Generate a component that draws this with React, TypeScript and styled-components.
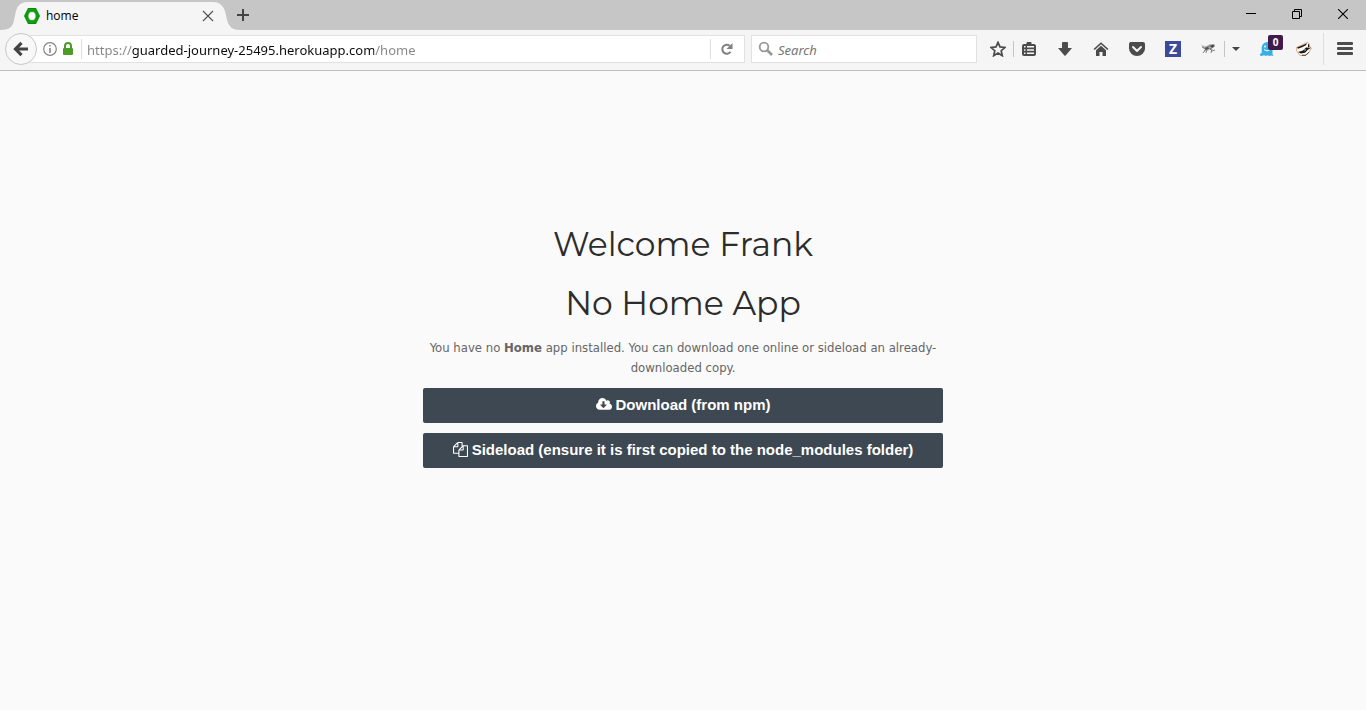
import React from "react";
import styled, { createGlobalStyle } from "styled-components";

const chromeFont = `"Noto Sans", "Open Sans", sans-serif`;

const GlobalStyle = createGlobalStyle`
  * { box-sizing: border-box; }
  body { margin: 0; background: #fafafa; font-family: "Open Sans", "Noto Sans", sans-serif; }
  button, input { font: inherit; }
  svg { display: block; }
`;

const Page = styled.div`
  display: flex;
  flex-direction: column;
  min-height: 100vh;
`;

const TabStrip = styled.header`
  display: flex;
  height: 30px;
  background: #c6c6c6;
`;

const Tab = styled.div`
  display: flex;
  align-items: center;
  width: 228px;
  height: 30px;
  padding: 2px 20px 0 24px;
  position: relative;
  font: 12px/16px "Open Sans", sans-serif;
  color: #000;
`;

const TabShape = styled.svg`
  position: absolute;
  inset: 0;
`;

const Favicon = styled.svg`
  position: relative;
  flex: none;
`;

const TabTitle = styled.span`
  position: relative;
  flex: 1;
  margin-left: 6px;
`;

const PlainButton = styled.button<{ $width?: number }>`
  position: relative;
  display: flex;
  flex: none;
  align-items: center;
  justify-content: center;
  width: ${(p) => (p.$width ? `${p.$width}px` : "auto")};
  padding: 0;
  border: 0;
  background: none;
  color: #4c4c4c;
`;

const TabClose = styled(PlainButton)`
  height: 16px;
  margin-right: -8px;
`;

const WindowControls = styled.div`
  display: flex;
  height: 28px;
  margin-left: auto;
`;

const Toolbar = styled.nav`
  display: flex;
  align-items: center;
  height: 41px;
  padding: 0 0 2px 5px;
  background: #f5f5f5;
  border-bottom: 1px solid #bdbdbd;
`;

const BackButton = styled(PlainButton)`
  z-index: 1;
  height: 32px;
  margin: 0 -17px 0 0;
  border: 1px solid #c8c8c8;
  border-radius: 50%;
  background: #f8f8f8;
`;

const field = `
  display: flex;
  align-items: center;
  height: 28px;
  background: #fff;
  border: 1px solid #e1e1e1;
`;

const AddressBar = styled.div`
  ${field}
  flex: 1;
  min-width: 0;
  padding-left: 22px;
`;

const Identity = styled(PlainButton)`
  gap: 5px;
  height: 16px;
  margin-right: 7px;
`;

const Divider = styled.span<{ $height: number; $color: string }>`
  flex: none;
  width: 1px;
  height: ${(p) => p.$height}px;
  background: ${(p) => p.$color};
`;

const AddressInput = styled.input`
  flex: 1;
  min-width: 0;
  height: 26px;
  margin-left: 5px;
  padding: 2px 0 0;
  border: 0;
  outline: 0;
  font: 13px/20px ${chromeFont};
  color: transparent;
  caret-color: #000;
  background: linear-gradient(90deg, #858585 0 45px, #0c0c0d 45px 287px, #858585 287px);
  background-clip: text;
  -webkit-background-clip: text;
`;

const SearchBox = styled.label`
  ${field}
  width: 226px;
  margin: 0 5px 0 6px;
  padding-left: 6px;
`;

const SearchInput = styled.input`
  flex: 1;
  min-width: 0;
  height: 26px;
  margin-left: 4px;
  padding: 2px 0 0;
  border: 0;
  outline: 0;
  background: none;
  font: 13px/20px ${chromeFont};
  &::placeholder { color: #757575; font-style: italic; opacity: 1; }
`;

const ToolButton = styled(PlainButton)`
  height: 36px;
`;

const BookmarksButton = styled(ToolButton)`
  margin-right: 3px;
`;

const Extensions = styled.div`
  display: flex;
  margin: 0 1px 0 3px;
`;

const ZotBadge = styled.span`
  width: 16px;
  height: 16px;
  background: #3c4a9c;
  color: #fff;
  font: bold 14px/16px "Open Sans", sans-serif;
  text-align: center;
`;

const CountBadge = styled.span`
  position: absolute;
  top: 4px;
  left: 18px;
  width: 15px;
  height: 15px;
  border-radius: 2px;
  background: #401a48;
  color: #fff;
  font: bold 10px/15px "Open Sans", sans-serif;
  text-align: center;
`;

const Main = styled.main`
  width: 100%;
  max-width: 520px;
  margin: 0 auto;
  padding: 153px 0 40px;
  text-align: center;
`;

const Heading = styled.h1`
  margin: 0 0 19px;
  font: 400 33px/40px Montserrat, Inter, sans-serif;
  color: #2c2c2c;
`;

const Subheading = styled(Heading)`
  margin-bottom: 15px;
`;

const Message = styled.p`
  margin: 0 0 10px;
  font: 13px/20px "DejaVu Sans Condensed", "Open Sans", sans-serif;
  color: #666;
`;

const ActionButton = styled.button`
  display: flex;
  align-items: center;
  justify-content: center;
  gap: 4px;
  width: 100%;
  height: 35px;
  margin-bottom: 10px;
  padding: 0 10px 2px;
  border: 0;
  border-radius: 2px;
  background: #3d4852;
  color: #fff;
  font: bold 15px/20px "Liberation Sans", Arial, sans-serif;
`;

const Svg = ({ children }: { children: React.ReactNode }) => (
  <svg width="16" height="16" viewBox="0 0 16 16" fill="currentColor" aria-hidden="true">
    {children}
  </svg>
);

export default function App() {
  return (
    <Page>
      <GlobalStyle />
      <TabStrip>
        <Tab>
          <TabShape width="240" height="30" viewBox="0 0 240 30" aria-hidden="true">
            <path d="M0 30C9 30 13 27 14 20L16 11Q18 2 28 2H213Q222 2 225 11L227 20Q229 30 240 30Z" fill="#f5f5f5" />
          </TabShape>
          <Favicon width="16" height="16" viewBox="0 0 16 16" aria-hidden="true">
            <path d="M4 0h8l4 8-4 8H4L0 8z" fill="#078c07" />
            <path d="M4.500 1h7L15 8l-3.500 7h-7L1 8z" fill="#0ba30b" />
            <ellipse cx="8" cy="8" rx="4" ry="4.500" fill="#fff" stroke="#067806" strokeWidth=".6" />
          </Favicon>
          <TabTitle>home</TabTitle>
          <TabClose $width={16} aria-label="Close tab">
            <svg width="12" height="12" viewBox="0 0 12 12" stroke="#555" strokeWidth="1.200">
              <path d="M1 1l10 10M11 1L1 11" />
            </svg>
          </TabClose>
        </Tab>
        <PlainButton $width={30} aria-label="New tab">
          <svg width="12" height="12" viewBox="0 0 12 12" stroke="#444" strokeWidth="2">
            <path d="M6 0v12M0 6h12" />
          </svg>
        </PlainButton>
        <WindowControls>
          <PlainButton $width={46} aria-label="Minimize">
            <svg width="10" height="10" viewBox="0 0 10 10" stroke="#000"><path d="M0 4.500h10" /></svg>
          </PlainButton>
          <PlainButton $width={46} aria-label="Restore">
            <svg width="10" height="10" viewBox="0 0 10 10" fill="none" stroke="#000">
              <path d="M.5 2.500h7v7h-7zM2.500 2.500v-2h7v7h-2" />
            </svg>
          </PlainButton>
          <PlainButton $width={46} aria-label="Close window">
            <svg width="10" height="10" viewBox="0 0 10 10" stroke="#000" strokeWidth="1.100">
              <path d="M0 0l10 10M10 0L0 10" />
            </svg>
          </PlainButton>
        </WindowControls>
      </TabStrip>

      <Toolbar aria-label="Navigation">
        <BackButton $width={32} aria-label="Back">
          <svg width="16" height="16" viewBox="0 0 16 16" fill="none" stroke="#444" strokeWidth="3.200">
            <path d="M8.500 1.800L2.500 8l6 6.200M3 8h12" />
          </svg>
        </BackButton>
        <AddressBar>
          <Identity aria-label="Site information">
            <svg width="14" height="14" viewBox="0 0 14 14">
              <circle cx="7" cy="7" r="6.300" fill="none" stroke="#858585" strokeWidth="1.200" />
              <path d="M6.200 3h1.600v1.600H6.200zM6.200 6h1.600v5H6.200z" fill="#858585" />
            </svg>
            <svg width="12" height="14" viewBox="0 0 12 14">
              <path d="M3 7V4a3 3 0 0 1 6 0v3" fill="none" stroke="#4d9a26" strokeWidth="2" />
              <rect x="1" y="6" width="10" height="7" rx="1" fill="#4d9a26" />
            </svg>
          </Identity>
          <Divider $height={20} $color="#dedede" />
          <AddressInput aria-label="Address" defaultValue="https://guarded-journey-25495.herokuapp.com/home" />
          <Divider $height={20} $color="#dedede" />
          <PlainButton $width={33} aria-label="Reload">
            <svg width="14" height="14" viewBox="0 0 14 14">
              <path d="M9.500 9.800A4.500 4.500 0 1 1 8.700 3.800" fill="none" stroke="#808080" strokeWidth="2" />
              <path d="M11.500 1v6H5.500z" fill="#808080" />
            </svg>
          </PlainButton>
        </AddressBar>
        <SearchBox>
          <svg width="16" height="16" viewBox="0 0 16 16" fill="none" stroke="#989898">
            <circle cx="6" cy="6" r="4.300" strokeWidth="1.800" />
            <path d="M9 9l5 5" strokeWidth="2.600" />
          </svg>
          <SearchInput aria-label="Search" placeholder="Search" />
        </SearchBox>

        <ToolButton $width={31} aria-label="Bookmark this page">
          <Svg>
            <path d="M8 1.300l2 4.600 5 .5-3.800 3.300 1.100 5L8 12.100l-4.300 2.600 1.100-5L1 6.400l5-.5z" fill="none" stroke="#4c4c4c" strokeWidth="1.700" />
          </Svg>
        </ToolButton>
        <Divider $height={16} $color="#c4c4c4" />
        <BookmarksButton $width={30} aria-label="Bookmarks">
          <Svg>
            <path fillRule="evenodd" d="M5.500 3V1.500L6.500 1h3l1 .5V3H13a2 2 0 0 1 2 2v8a2 2 0 0 1-2 2H3a2 2 0 0 1-2-2V5a2 2 0 0 1 2-2zM3 5v1.600h1.500V5zm3 0v1.600h7V5zM3 8.200v1.600h1.500V8.200zm3 0v1.600h7V8.200zM3 11.400V13h1.500v-1.600zm3 0V13h7v-1.600z" />
          </Svg>
        </BookmarksButton>
        <ToolButton $width={36} aria-label="Downloads">
          <Svg><path d="M5 2q0-1 1-1h4q1 0 1 1v5h4L8.600 14.500q-.6.6-1.200 0L1 7h4z" /></Svg>
        </ToolButton>
        <ToolButton $width={36} aria-label="Home">
          <Svg>
            <path d="M8 1.200L15.500 8l-1.200 1L8 3.300 1.700 9 .5 8z" />
            <path d="M8 4.700l5 4.500V15H9.500v-4h-3v4H3V9.200z" />
          </Svg>
        </ToolButton>
        <ToolButton $width={36} aria-label="Save to Pocket">
          <Svg>
            <path d="M2 1h12q2 0 2 2v4.500a8 7.500 0 0 1-16 0V3q0-2 2-2z" />
            <path d="M4 6l4 4 4-4" fill="none" stroke="#f5f5f5" strokeWidth="2" strokeLinecap="round" strokeLinejoin="round" />
          </Svg>
        </ToolButton>
        <ToolButton $width={36} aria-label="Zotero">
          <ZotBadge>Z</ZotBadge>
        </ToolButton>
        <ToolButton $width={33} aria-label="Firebug">
          <Svg>
            <path d="M1 4l5 1.500L10 3l5.500.3-4 2 3.500.2-4 2.500L7 10 4 8z" fill="#b5b5b5" />
            <path d="M5 7l4-2 4 .5M4 10l5-3 3 1-1 4M6 8l-3 4M10 8l2 2 3-1M7 8l-1 4M2 6l4 2" fill="none" stroke="#777" strokeWidth=".9" />
            <path d="M10 5l3-1.500 2 1.500-3 2zM5 7l3-1 1 1.500-3 1z" fill="#4a4a4a" />
          </Svg>
        </ToolButton>
        <Divider $height={16} $color="#c4c4c4" />
        <ToolButton $width={22} aria-label="Extension menu">
          <svg width="8" height="4" viewBox="0 0 8 4" fill="#444"><path d="M0 0h8L4 4z" /></svg>
        </ToolButton>
        <Extensions>
          <ToolButton $width={36} aria-label="Ghostery">
            <Svg>
              <path d="M1.500 15Q-.5 15 0 12.500q1 .5 1.700-.7V6.500a5.400 5.400 0 0 1 10.800 0V13l1 2-2-.5-2 .5-2-.7-1.600.7-1.900-.7z" fill="#36aee6" />
              <circle cx="5" cy="5.500" r="1" fill="#fff" /><circle cx="9" cy="5.500" r="1" fill="#fff" />
              <path d="M4 8.500q3 3 6 0" fill="none" stroke="#fff" />
            </Svg>
            <CountBadge>0</CountBadge>
          </ToolButton>
          <ToolButton $width={36} aria-label="Privacy Badger">
            <Svg>
              <path d="M.5 6.500L6 4l5-2.500 2 1 .5 3L15.500 7 13 11l-4 3.500H4L.8 10z" fill="#fff" stroke="#d8945c" strokeWidth=".8" />
              <path d="M1 6.500L6 4.500l5-2.200-1 2-4 2-4 1.500zM2 11l5-1.500 3-3 5 .2-3 2-3 3-4 .8zM12 3l1 .5.500 2-1.500 1z" fill="#1d1a18" />
              <path d="M6 14.200h4l3-3" fill="none" stroke="#1d1a18" strokeWidth=".8" />
              <circle cx="9" cy="9" r=".7" fill="#fff" />
            </Svg>
          </ToolButton>
        </Extensions>
        <Divider $height={32} $color="#dedede" />
        <ToolButton $width={42} aria-label="Open menu">
          <Svg>
            <rect y="1" width="16" height="3" rx="1" />
            <rect y="6" width="16" height="3" rx="1" />
            <rect y="11" width="16" height="3" rx="1" />
          </Svg>
        </ToolButton>
      </Toolbar>

      <Main>
        <Heading>Welcome Frank</Heading>
        <Subheading as="h2">No Home App</Subheading>
        <Message>
          You have no <b>Home</b> app installed. You can download one online or sideload an already-downloaded copy.
        </Message>
        <ActionButton>
          <svg width="16" height="15" viewBox="-64 0 1920 1792" fill="currentColor" aria-hidden="true">
            <path d="M1216 928q0-14-9-23t-23-9h-224v-352q0-13-9.500-22.500t-22.500-9.500h-192q-13 0-22.500 9.500t-9.500 22.500v352h-224q-13 0-22.500 9.500t-9.500 22.500q0 14 9 23l352 352q9 9 23 9t23-9l351-351q10-12 10-24zm640 224q0 159-112.500 271.500t-271.500 112.500h-1088q-185 0-316.500-131.500t-131.500-316.500q0-130 70-240t188-165q-2-30-2-43 0-212 150-362t362-150q156 0 285.500 87t188.500 231q71-62 166-62 106 0 181 75t75 181q0 76-41 138 130 31 213.500 135.500t83.500 238.500z" />
          </svg>
          Download (from npm)
        </ActionButton>
        <ActionButton>
          <svg width="15" height="15" viewBox="0 0 1792 1792" fill="currentColor" aria-hidden="true">
            <path d="M1696 384q40 0 68 28t28 68v1216q0 40-28 68t-68 28h-960q-40 0-68-28t-28-68v-288h-544q-40 0-68-28t-28-68v-672q0-40 20-88t48-76l408-408q28-28 76-48t88-20h416q40 0 68 28t28 68v328q68-40 128-40h416zm-544 213l-299 299h299v-299zm-640-384l-299 299h299v-299zm196 647l316-316v-416h-384v416q0 40-28 68t-68 28h-416v640h512v-256q0-40 20-88t48-76zm956 804v-1152h-384v416q0 40-28 68t-68 28h-416v640h896z" />
          </svg>
          Sideload (ensure it is first copied to the node_modules folder)
        </ActionButton>
      </Main>
    </Page>
  );
}
